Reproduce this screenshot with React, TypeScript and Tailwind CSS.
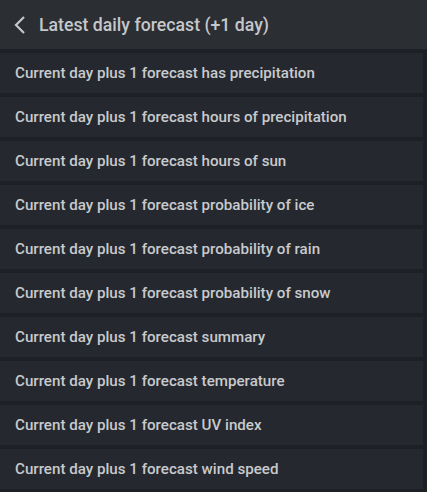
const items = [
  "Current day plus 1 forecast has precipitation",
  "Current day plus 1 forecast hours of precipitation",
  "Current day plus 1 forecast hours of sun",
  "Current day plus 1 forecast probability of ice",
  "Current day plus 1 forecast probability of rain",
  "Current day plus 1 forecast probability of snow",
  "Current day plus 1 forecast summary",
  "Current day plus 1 forecast temperature",
  "Current day plus 1 forecast UV index",
  "Current day plus 1 forecast wind speed",
];

export default function App() {
  return (
    <div className="h-[492px] w-[427px] overflow-hidden bg-[#1d2024] font-['Roboto',sans-serif]">
      <div className="flex h-[49px] items-center bg-[#2b2e33] pl-[12px] pt-[1px]">
        <svg width="16" height="20" viewBox="0 0 16 20" className="mr-[11px]">
          <path
            d="M12 2 L4 10 L12 18"
            fill="none"
            stroke="#c5c7ca"
            strokeWidth="2.2"
          />
        </svg>
        <span className="text-[17.7px] font-medium text-[#c5c7ca]">
          Latest daily forecast (+1 day)
        </span>
      </div>
      <div className="flex flex-col gap-[4px] pr-[4px] pt-[4px]">
        {items.map((item) => (
          <div
            key={item}
            className="flex h-[40px] items-center bg-[#25282e] pl-[15px] pt-[1px] text-[15.15px] font-medium text-[#c8cacd]"
          >
            {item}
          </div>
        ))}
      </div>
    </div>
  );
}
